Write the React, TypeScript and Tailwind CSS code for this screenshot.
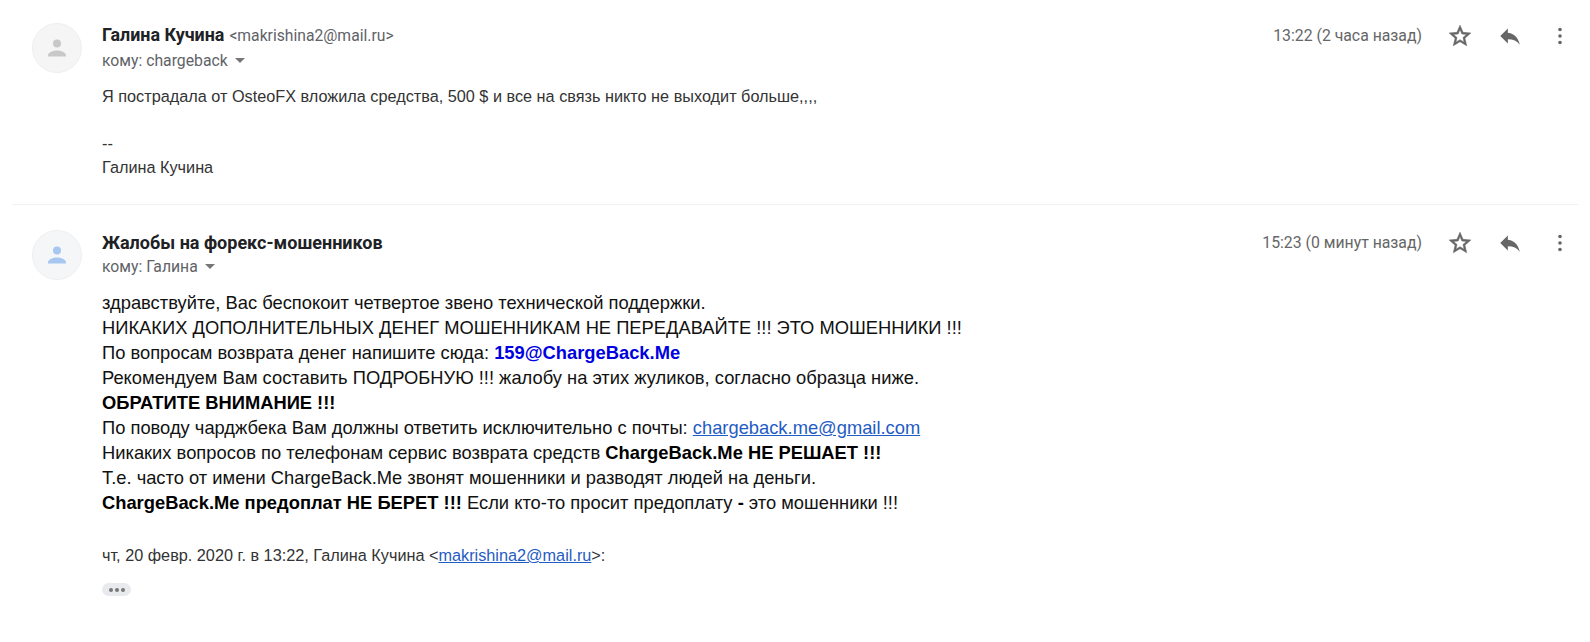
import React from "react";

const PersonAvatar = ({ bg, fg }: { bg: string; fg: string }) => (
  <div className={`w-[50px] h-[50px] shrink-0 rounded-full border border-[#efefef] flex items-center justify-center ${bg}`}>
    <svg width="24" height="24" viewBox="0 0 24 24" className={fg} fill="currentColor">
      <circle cx="12" cy="7.500" r="4" />
      <path d="M3 19.500c0-3.200 5.500-5 9-5s9 1.800 9 5v1H3z" />
    </svg>
  </div>
);

const Actions = ({ time }: { time: string }) => (
  <div className="flex items-center">
    <span className="font-['Roboto',sans-serif] text-[15.8px] leading-[20px] text-[#666] mr-[25px]">{time}</span>
    <svg width="26" height="26" viewBox="0 0 24 24" fill="#666" stroke="#666" strokeWidth="0.5">
      <path d="M22 9.240l-7.190-.62L12 2 9.190 8.630 2 9.240l5.460 4.730L5.820 21 12 17.270 18.180 21l-1.630-7.030L22 9.240zM12 15.400l-3.760 2.270 1-4.280-3.320-2.880 4.380-.38L12 6.100l1.710 4.040 4.380.38-3.320 2.880 1 4.280L12 15.400z" />
    </svg>
    <svg width="26" height="26" viewBox="0 0 24 24" fill="#666" className="ml-[24px]">
      <path d="M10 9V5l-7 7 7 7v-4.100c5 0 8.500 1.600 11 5.100-1-5-4-10-11-11z" />
    </svg>
    <svg width="24" height="24" viewBox="0 0 24 24" fill="#666" className="ml-[25px] mr-[6px]">
      <circle cx="12" cy="5.500" r="1.800" />
      <circle cx="12" cy="12" r="1.800" />
      <circle cx="12" cy="18.500" r="1.800" />
    </svg>
  </div>
);

const Caret = () => <span className="inline-block ml-[7px] mb-[1px] w-0 h-0 border-x-[5px] border-x-transparent border-t-[5px] border-t-[#777]" />;

const App: React.FC = () => {
  return (
    <div className="w-[1590px] h-[642px] overflow-hidden bg-white font-['Liberation_Sans',Arial,sans-serif] text-[#222]">
      {/* first message */}
      <div className="h-[205px] mx-[12px] pl-[20px] pt-[23px] border-b border-[#f1f1f1] flex">
        <PersonAvatar bg="bg-[#f5f5f5]" fg="text-[#c8c8c8]" />
        <div className="ml-[20px] flex-1">
          <div className="flex justify-between items-start">
            <div>
              <div className="font-['Roboto',sans-serif] leading-[20px] pt-[2px]">
                <span className="text-[17.9px] font-bold text-[#202124]">Галина Кучина</span>
                <span className="text-[15.7px] text-[#5f6368] ml-[5px]">&lt;makrishina2@mail.ru&gt;</span>
              </div>
              <div className="font-['Roboto',sans-serif] text-[15.75px] leading-[20px] text-[#5f6368] mt-[5px] flex items-center">
                кому: chargeback
                <Caret />
              </div>
            </div>
            <Actions time="13:22 (2 часа назад)" />
          </div>
          <div className="mt-[13px] text-[16.25px] leading-[24px] text-[#333]">
            <p>Я пострадала от OsteoFX вложила средства, 500 $ и все на связь никто не выходит больше,,,,</p>
            <p className="mt-[23px]">--</p>
            <p>Галина Кучина</p>
          </div>
        </div>
      </div>

      {/* second message */}
      <div className="mx-[12px] pl-[20px] pt-[25px] flex">
        <PersonAvatar bg="bg-[#f5f6f8]" fg="text-[#a8c7f0]" />
        <div className="ml-[20px] flex-1">
          <div className="flex justify-between items-start">
            <div>
              <div className="font-['Roboto',sans-serif] text-[18px] font-bold leading-[20px] pt-[3px] text-[#202124]">Жалобы на форекс-мошенников</div>
              <div className="font-['Roboto',sans-serif] text-[15.75px] leading-[20px] text-[#5f6368] mt-[4px] flex items-center">
                кому: Галина
                <Caret />
              </div>
            </div>
            <Actions time="15:23 (0 минут назад)" />
          </div>
          <div className="mt-[13px] text-[18.34px] leading-[25px] text-[#111]">
            <p>здравствуйте, Вас беспокоит четвертое звено технической поддержки.</p>
            <p>НИКАКИХ ДОПОЛНИТЕЛЬНЫХ ДЕНЕГ МОШЕННИКАМ НЕ ПЕРЕДАВАЙТЕ !!! ЭТО МОШЕННИКИ !!!</p>
            <p>По вопросам возврата денег напишите сюда: <b className="text-[#0000e0]">159@ChargeBack.Me</b></p>
            <p>Рекомендуем Вам составить ПОДРОБНУЮ !!! жалобу на этих жуликов, согласно образца ниже.</p>
            <p><b className="text-black">ОБРАТИТЕ ВНИМАНИЕ !!!</b></p>
            <p>По поводу чарджбека Вам должны ответить исключительно с почты: <a className="text-[#1f5cc4] underline">chargeback.me@gmail.com</a></p>
            <p>Никаких вопросов по телефонам сервис возврата средств <b className="text-black">ChargeBack.Me НЕ РЕШАЕТ !!!</b></p>
            <p>Т.е. часто от имени ChargeBack.Me звонят мошенники и разводят людей на деньги.</p>
            <p><b className="text-black">ChargeBack.Me предоплат НЕ БЕРЕТ !!!</b> Если кто-то просит предоплату <b className="text-black">-</b> это мошенники !!!</p>
          </div>
          <p className="mt-[30px] text-[16.25px] leading-[20px] text-[#333]">
            чт, 20 февр. 2020 г. в 13:22, Галина Кучина &lt;<a className="text-[#1f5cc4] underline">makrishina2@mail.ru</a>&gt;:
          </p>
          <div className="mt-[18px] w-[29px] h-[13px] rounded-full bg-[#e8eaed] flex items-center justify-center gap-[2px]">
            <span className="w-[4px] h-[4px] rounded-full bg-[#777]" />
            <span className="w-[4px] h-[4px] rounded-full bg-[#777]" />
            <span className="w-[4px] h-[4px] rounded-full bg-[#777]" />
          </div>
        </div>
      </div>
    </div>
  );
};

export default App;
